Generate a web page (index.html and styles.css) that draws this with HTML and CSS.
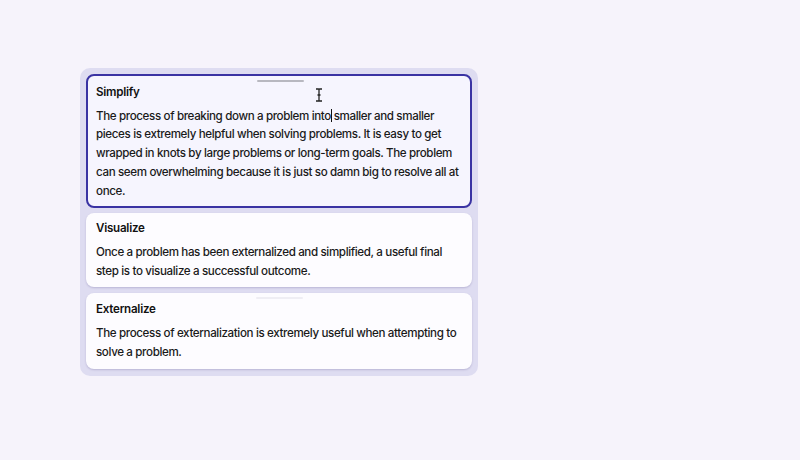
FILE: index.html
```html
<!DOCTYPE html>
<html>
<head>
<meta charset="utf-8">
<link rel="stylesheet" href="styles.css">
</head>
<body>
<div class="list">
  <div class="card active">
    <span class="handle"></span>
    <div class="title">Simplify</div>
    <div class="body">The process of breaking down a problem into<span class="caret"></span> smaller and smaller pieces is extremely helpful when solving problems. It is easy to get wrapped in knots by large problems or long-term goals. The problem can seem overwhelming because it is just so damn big to resolve all at once.</div>
    <svg class="ibeam" width="8" height="14" viewBox="0 0 8 14"><path d="M1 1h2.2c.6 0 .8.3.8.8v10.4c0 .5.2.8.8.8H7M7 1H4.8c-.6 0-.8.3-.8.8M4 12.2c0 .5-.2.8-.8.8H1M2.5 7h3" fill="none" stroke="#222" stroke-width="1.3"/></svg>
  </div>
  <div class="card">
    <div class="title">Visualize</div>
    <div class="body">Once a problem has been externalized and simplified, a useful final step is to visualize a successful outcome.</div>
  </div>
  <div class="card last">
    <span class="handle faint"></span>
    <div class="title">Externalize</div>
    <div class="body">The process of externalization is extremely useful when attempting to solve a problem.</div>
  </div>
</div>
</body>
</html>
```
FILE: styles.css
```css
html, body {
  margin: 0;
  padding: 0;
}
body {
  background: #f6f3fb;
  width: 800px;
  height: 460px;
  font-family: Inter, "Noto Sans", sans-serif;
  padding-top: 68px;
  box-sizing: border-box;
}
.list {
  margin-left: 80px;
  width: 398px;
  box-sizing: border-box;
  padding: 6px 6px 7px;
  background: #dedcf1;
  border-radius: 10px;
  display: flex;
  flex-direction: column;
  gap: 5px;
}
.card {
  position: relative;
  background: #fdfcff;
  border-radius: 8px;
  padding: 8px 10px 7px;
  box-shadow: 0 1px 2px rgba(60, 50, 120, 0.22);
}
.card.active {
  background: #f6f5fe;
  border: 2px solid #3a33a3;
  padding: 9px 8px 6px;
  box-shadow: none;
}
.card.last {
  margin-top: 1px;
  padding-top: 9px;
  padding-bottom: 8px;
}
.title {
  font-size: 11.6px;
  font-weight: 600;
  line-height: 14px;
  letter-spacing: -0.25px;
  color: #111;
  margin-bottom: 7.5px;
}
.body {
  font-size: 11.6px;
  font-weight: 450;
  line-height: 18.75px;
  letter-spacing: -0.37px;
  color: #1a1a1a;
}
.handle {
  position: absolute;
  top: 4px;
  left: 170px;
  width: 47px;
  height: 2px;
  background: #b8b8c0;
  border-radius: 1px;
}
.active .handle {
  top: 4px;
  left: 169px;
}
.handle.faint {
  background: #efeef4;
}
.caret {
  display: inline-block;
  width: 1px;
  height: 13px;
  margin-right: -1px;
  background: #111;
  vertical-align: -2px;
}
.ibeam {
  position: absolute;
  left: 227px;
  top: 12px;
}
```
